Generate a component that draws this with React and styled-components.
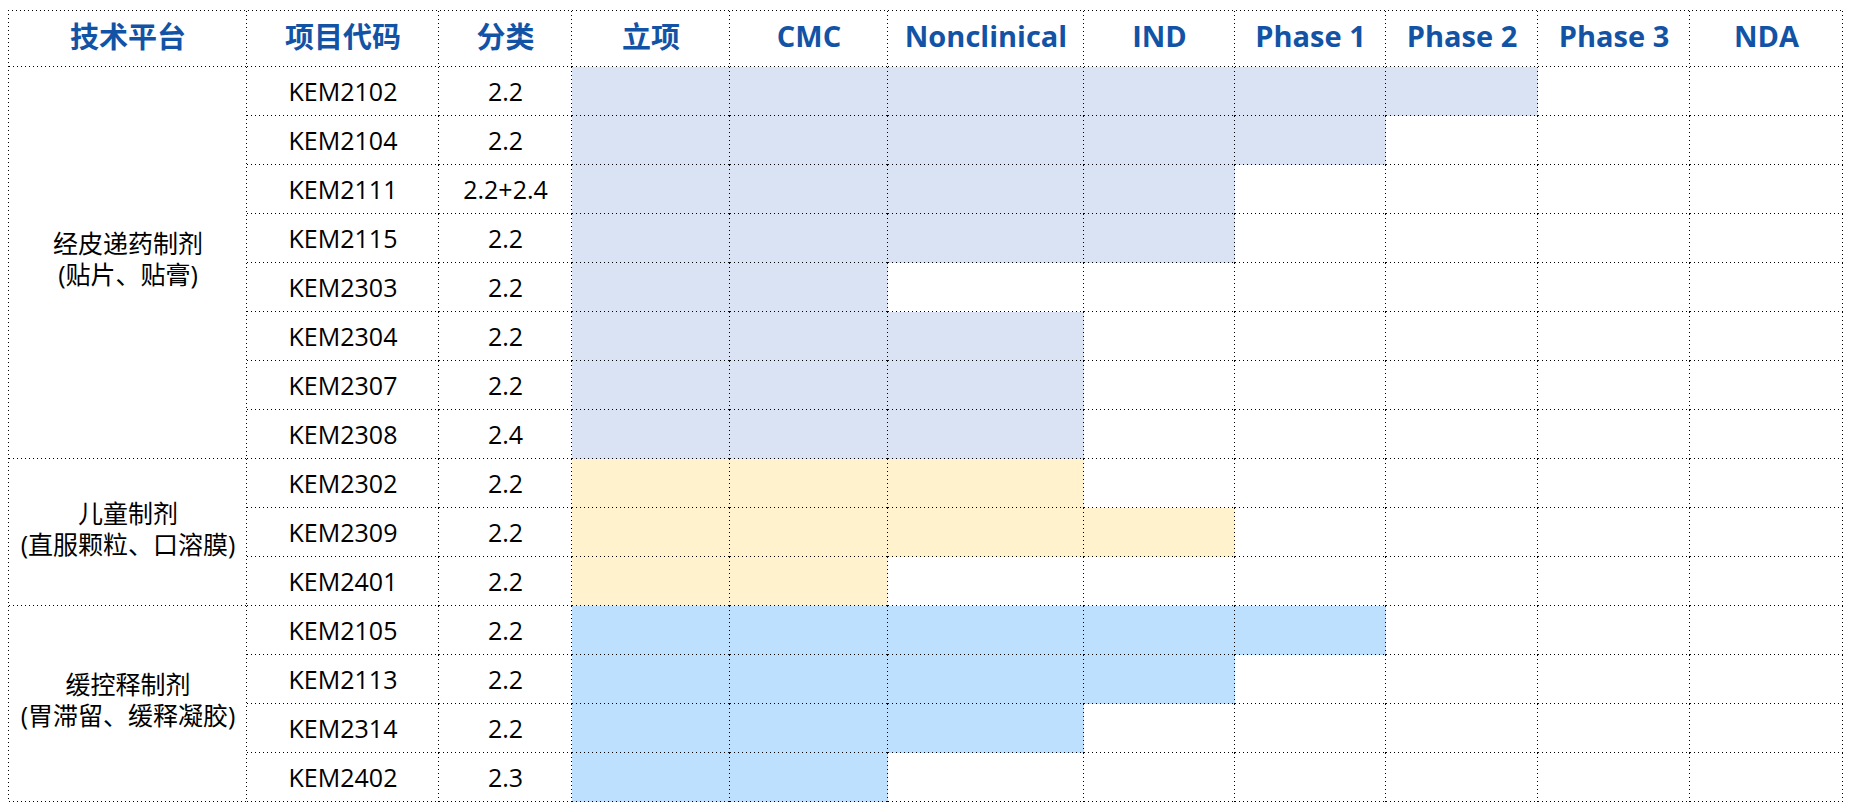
import React from 'react'
import styled, { createGlobalStyle } from 'styled-components'

const GlobalStyle = createGlobalStyle`
body {
  margin: 0;
  background: #ffffff;
  font-family: "Open Sans", "Noto Sans CJK SC", sans-serif;
}
`

const COLS = [238, 192, 133, 158, 158, 196, 151, 151, 152, 152, 153]
const STAGES = ['立项', 'CMC', 'Nonclinical', 'IND', 'Phase 1', 'Phase 2', 'Phase 3', 'NDA']

const FILLS = {
  lavender: '#dae3f3',
  yellow: '#fff2cc',
  sky: '#bde0fe',
}

const groups = [
  {
    name: '经皮递药制剂',
    sub: '(贴片、贴膏)',
    color: 'lavender',
    items: [
      ['KEM2102', '2.2', 6],
      ['KEM2104', '2.2', 5],
      ['KEM2111', '2.2+2.4', 4],
      ['KEM2115', '2.2', 4],
      ['KEM2303', '2.2', 2],
      ['KEM2304', '2.2', 3],
      ['KEM2307', '2.2', 3],
      ['KEM2308', '2.4', 3],
    ],
  },
  {
    name: '儿童制剂',
    sub: '(直服颗粒、口溶膜)',
    color: 'yellow',
    items: [
      ['KEM2302', '2.2', 3],
      ['KEM2309', '2.2', 4],
      ['KEM2401', '2.2', 2],
    ],
  },
  {
    name: '缓控释制剂',
    sub: '(胃滞留、缓释凝胶)',
    color: 'sky',
    items: [
      ['KEM2105', '2.2', 5],
      ['KEM2113', '2.2', 4],
      ['KEM2314', '2.2', 3],
      ['KEM2402', '2.3', 2],
    ],
  },
]

const Page = styled.div`
padding: 10px 0 0 8px;
`

const Grid = styled.div`
display: grid;
grid-template-columns: ${COLS.map(w => w + 'px').join(' ')};
grid-template-rows: 56px;
grid-auto-rows: 49px;
width: max-content;
padding: 1px 0 0 1px;
background-image:
  linear-gradient(to right, #000 1px, transparent 1px),
  linear-gradient(to bottom, #000 1px, transparent 1px);
background-size: 4px 1px, 1px 4px;
background-position: 0 0, 0 0;
background-repeat: repeat-x, repeat-y;
`

const Cell = styled.div`
display: flex;
align-items: center;
justify-content: center;
text-align: center;
background-color: ${props => props.$fill ? FILLS[props.$fill] : 'transparent'};
background-image:
  linear-gradient(to right, #000 1px, transparent 1px),
  linear-gradient(to bottom, #000 1px, transparent 1px);
background-size: 4px 1px, 1px 4px;
background-position: 0 100%, 100% 0;
background-repeat: repeat-x, repeat-y;
color: #000;
font-size: 25px;
padding-bottom: 2px;
`

const HeadCell = styled(Cell)`
color: #1253a6;
font-size: 29px;
font-weight: 700;
padding-bottom: 8px;
`

const GroupCell = styled(Cell)`
grid-row: span ${props => props.$span};
flex-direction: column;
font-size: 25px;
line-height: 31px;
padding-bottom: 8px;
`

const App = () => {
  return (
    <Page>
      <GlobalStyle />
      <Grid>
        <HeadCell>技术平台</HeadCell>
        <HeadCell>项目代码</HeadCell>
        <HeadCell>分类</HeadCell>
        {STAGES.map(s => <HeadCell key={s}>{s}</HeadCell>)}
        {groups.map(g => g.items.map((item, idx) => (
          <React.Fragment key={item[0]}>
            {idx === 0 && (
              <GroupCell $span={g.items.length}>
                <span>{g.name}</span>
                <span>{g.sub}</span>
              </GroupCell>
            )}
            <Cell>{item[0]}</Cell>
            <Cell>{item[1]}</Cell>
            {STAGES.map((s, i) => (
              <Cell key={s} $fill={i < item[2] ? g.color : null} />
            ))}
          </React.Fragment>
        )))}
      </Grid>
    </Page>
  )
}

export default App
